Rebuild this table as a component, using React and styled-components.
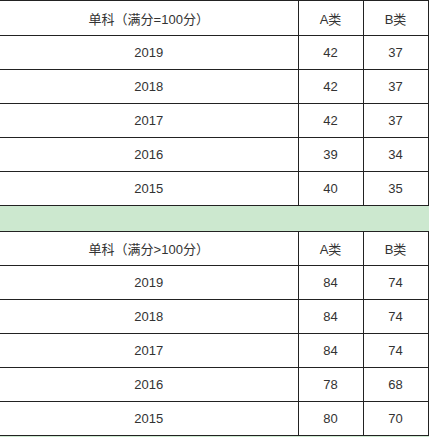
import React from 'react';
import styled, { createGlobalStyle } from 'styled-components';

const GlobalStyle = createGlobalStyle`
    html, body {
        margin: 0;
        padding: 0;
        background: #cce8cf;
    }
`;

const tables = [
    {
        title: '单科（满分=100分）',
        rows: [
            ['2019', 42, 37],
            ['2018', 42, 37],
            ['2017', 42, 37],
            ['2016', 39, 34],
            ['2015', 40, 35],
        ],
    },
    {
        title: '单科（满分>100分）',
        rows: [
            ['2019', 84, 74],
            ['2018', 84, 74],
            ['2017', 84, 74],
            ['2016', 78, 68],
            ['2015', 80, 70],
        ],
    },
];

function App() {
    return (
        <PageStyled>
            <GlobalStyle />
            {tables.map((t, i) => (
                <Table key={i} $first={i === 0}>
                    <colgroup>
                        <col style={{ width: 298 }} />
                        <col style={{ width: 65 }} />
                        <col style={{ width: 65 }} />
                    </colgroup>
                    <tbody>
                        <tr>
                            <Cell $tall={i === 0}>{t.title}</Cell>
                            <Cell $tall={i === 0}>A类</Cell>
                            <Cell $tall={i === 0}>B类</Cell>
                        </tr>
                        {t.rows.map((r) => (
                            <tr key={r[0]}>
                                <Cell>{r[0]}</Cell>
                                <Cell>{r[1]}</Cell>
                                <Cell>{r[2]}</Cell>
                            </tr>
                        ))}
                    </tbody>
                </Table>
            ))}
        </PageStyled>
    );
}

const PageStyled = styled.div`
    display: flex;
    flex-direction: column;
    gap: 25px;
    width: 429px;
`;

const Table = styled.table`
    width: 428px;
    table-layout: fixed;
    border-collapse: collapse;
    background: #fff;
    font-family: "Liberation Sans", "Noto Sans CJK SC", sans-serif;
    font-size: 13px;
    color: #333;
`;

const Cell = styled.td`
    height: ${(p) => (p.$tall ? 34 : 33)}px;
    padding: 0;
    text-align: center;
    vertical-align: middle;
    border: 1px solid #222;
    &:first-child {
        border-left: none;
    }
`;

export default App;
